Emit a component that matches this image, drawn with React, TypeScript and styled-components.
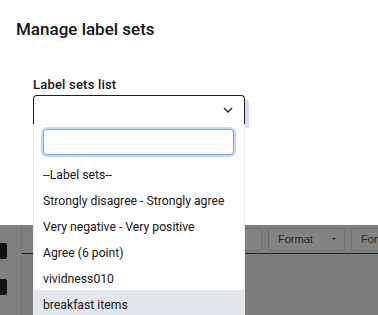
import React from 'react';
import styled, { createGlobalStyle } from 'styled-components';

const GlobalStyle = createGlobalStyle`
  html, body {
    margin: 0;
    padding: 0;
    background: #ffffff;
  }
  body {
    font-family: Roboto, "Noto Sans", "Liberation Sans", sans-serif;
    color: #161616;
  }
`;

export const Screen = styled.div`
  width: 378px;
  height: 315px;
  display: flex;
  flex-direction: column;
  overflow: hidden;
`;

export const Modal = styled.div`
  height: 225px;
  flex-shrink: 0;
  background: #ffffff;
  padding: 0 16px;
  box-sizing: border-box;
  position: relative;
  z-index: 2;
`;

export const Title = styled.h1`
  margin: 0;
  padding-top: 17px;
  font-size: 17px;
  line-height: 24px;
  font-weight: 500;
`;

export const Field = styled.div`
  margin: 36px 0 0 17px;
  width: 212px;
`;

export const FieldLabel = styled.label`
  display: block;
  font-size: 13px;
  line-height: 16px;
  font-weight: 500;
  letter-spacing: 0.2px;
  margin-bottom: 2px;
`;

export const SelectWrap = styled.div`
  position: relative;
`;

export const SelectBox = styled.div`
  height: 29px;
  box-sizing: border-box;
  border: 1px solid #1d1d1d;
  border-bottom: none;
  border-radius: 4px 4px 0 0;
  box-shadow: 4px 4px 0 0 #dcd8fb;
  background: #ffffff;
  display: flex;
  align-items: center;
  justify-content: flex-end;
  padding-right: 11px;
`;

export const Menu = styled.div`
  position: absolute;
  top: 29px;
  left: 0;
  width: 212px;
  box-sizing: border-box;
  background: #ffffff;
  border-left: 1px solid #ececec;
  border-right: 1px solid #ececec;
  padding-top: 5px;
  z-index: 3;
`;

export const SearchInput = styled.input`
  display: block;
  width: 191px;
  height: 26px;
  box-sizing: border-box;
  margin: 0 0 5px 9px;
  border: 1px solid #7fa3f6;
  border-radius: 4px;
  box-shadow: 0 0 0 2px #c8d7fd;
  outline: none;
  font-family: inherit;
  font-size: 13px;
`;

export const Option = styled.div<{ $active?: boolean }>`
  height: 26px;
  box-sizing: border-box;
  padding: 4px 0 0 9px;
  line-height: 22px;
  font-size: 12.2px;
  color: #161616;
  white-space: nowrap;
  background: ${(p) => (p.$active ? '#e4e7eb' : '#ffffff')};
`;

/* page behind the dialog, dimmed by the backdrop */
export const Behind = styled.div`
  flex: 1;
  display: flex;
  background: #7f7f7f;
`;

export const Rail = styled.div`
  width: 22px;
  flex-shrink: 0;
  border-right: 1px solid #767676;
  background: #808080;
  display: flex;
  flex-direction: column;
  padding-top: 18px;
  box-sizing: border-box;
`;

export const RailIcon = styled.div`
  width: 7px;
  height: 16px;
  background: #121212;
  border-radius: 0 2px 2px 0;
  margin-bottom: 20px;
`;

export const RailBox = styled.div`
  margin-top: 5px;
  width: 21px;
  flex: 1;
  border: 1px solid #6e6e6e;
  border-left: none;
  border-bottom: none;
  box-sizing: border-box;
`;

export const Main = styled.div`
  flex: 1;
  display: flex;
  flex-direction: column;
  background: #7c7c7c;
`;

export const Toolbar = styled.div`
  height: 29px;
  display: flex;
  align-items: center;
  gap: 6px;
  padding-left: 163px;
  border-bottom: 1px solid #1f1f1f;
  background: #7f7f7f;
  box-sizing: border-box;
`;

export const ToolButton = styled.div`
  flex-shrink: 0;
  width: 77px;
  height: 23px;
  box-sizing: border-box;
  border: 1px solid #6c6c6c;
  border-radius: 3px;
  background: #838383;
  display: flex;
  align-items: center;
  justify-content: space-between;
  padding: 0 8px 0 9px;
  font-family: "Liberation Sans", Arial, sans-serif;
  font-size: 11px;
  color: #262626;
`;

export const Caret = styled.span`
  width: 0;
  height: 0;
  border-left: 2.5px solid transparent;
  border-right: 2.5px solid transparent;
  border-top: 2px solid #262626;
`;

const Chevron = () => (
  <svg width="10" height="6" viewBox="0 0 10 6" fill="none">
    <path d="M1 1 L5 5 L9 1" stroke="#1d1d1d" strokeWidth="1.3" />
  </svg>
);

const options = [
  '--Label sets--',
  'Strongly disagree - Strongly agree',
  'Very negative - Very positive',
  'Agree (6 point)',
  'vividness010',
  'breakfast items',
];

// the buttons left of these sit under the open menu
const tools = ['', 'Format', 'Font'];

export default function App() {
  return (
    <>
      <GlobalStyle />
      <Screen>
        <Modal>
          <Title>Manage label sets</Title>
          <Field>
            <FieldLabel>Label sets list</FieldLabel>
            <SelectWrap>
              <SelectBox>
                <Chevron />
              </SelectBox>
              <Menu>
                <SearchInput />
                {options.map((o) => (
                  <Option key={o} $active={o === 'breakfast items'}>
                    {o}
                  </Option>
                ))}
              </Menu>
            </SelectWrap>
          </Field>
        </Modal>
        <Behind>
          <Rail>
            <RailIcon />
            <RailIcon />
            <RailBox />
          </Rail>
          <Main>
            <Toolbar>
              {tools.map((t, i) => (
                <ToolButton key={i}>
                  {t}
                  <Caret />
                </ToolButton>
              ))}
            </Toolbar>
          </Main>
        </Behind>
      </Screen>
    </>
  );
}
